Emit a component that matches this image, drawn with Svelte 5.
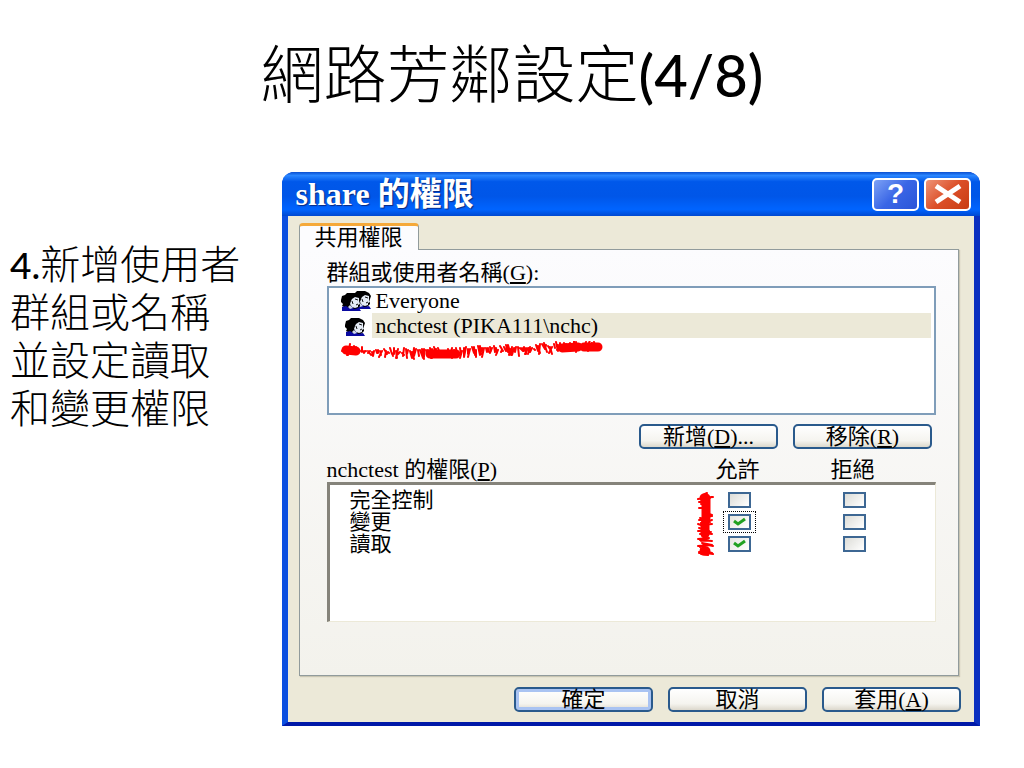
<script lang="ts">
  type Permission = { id: string; label: string; allow: boolean; deny: boolean; focused?: boolean };

  let permissions = $state<Permission[]>([
    { id: "full", label: "完全控制", allow: false, deny: false },
    { id: "change", label: "變更", allow: true, deny: false, focused: true },
    { id: "read", label: "讀取", allow: true, deny: false },
  ]);

  const steps = ["新增使用者", "群組或名稱", "並設定讀取", "和變更權限"];

  const noise = (i: number) => {
    const n = Math.sin(i * 127.1 + 11.7) * 43758.5453;
    return n - Math.floor(n);
  };

  // rough marker stroke: short dashes scattered round [position, centre, half thickness]
  function scribble(points: number[][], vertical = false) {
    return points
      .map(([t, c, h], i) => {
        const a = Math.round(c - h + noise(i) * h);
        const b = Math.round(c + h - noise(i + 500) * h);
        const shift = Math.round(noise(i + 900) * 6 - 3);
        return vertical ? `M${a} ${t}L${b} ${t + shift}` : `M${t} ${a}L${t + shift} ${b}`;
      })
      .join("");
  }

  const underline = scribble(
    Array.from({ length: 126 }, (_, i) => {
      const t = 4 + i * 2;
      const centre = t < 40 ? 8 + t / 10 : t < 110 ? 12 : 12 - (t - 110) / 20;
      const half = t > 25 && t < 50 ? 4 : 6;
      return [t, centre, half];
    })
  );
  const sideMark = scribble(
    Array.from({ length: 42 }, (_, i) => [4 + Math.round(i * 1.45), 9, 8]),
    true
  );
</script>

{#snippet head()}
  <path d="m1 8 1-4 3-1 2-2h8l4 2 2 3-1 3v5l-3 3H7l-3-2-2-1 1-2-2-2z" fill="#000" />
  <path d="m12 7 3-2 4 1v3l1 3-2 1v2l-3 1-3-1-2-3 1-3z" fill="#e4ebf5" />
  <path d="m15 7 3 1m-2 5 2-1M12 9l1 3" stroke="#111" fill="none" />
  <path d="m2 15 4-1 3 2 2-2 3 3 5-1 2 3H2z" fill="#0a0aa0" />
  <path d="m10 13 3 3-3 1-2-2z" fill="#cfd8ea" />
{/snippet}

<main class="slide">
  <h1>網路芳鄰設定<span class="latin">(4/8)</span></h1>

  <div class="content">
    <p class="note">
      <span class="latin">4.</span>{#each steps as step, i}{#if i}<br />{/if}{step}{/each}
    </p>

    <section class="dialog" aria-labelledby="dialog-title">
      <header class="titlebar">
        <h2 id="dialog-title">share 的權限</h2>
        <button class="caption help" aria-label="說明">?</button>
        <button class="caption close" aria-label="關閉">
          <svg viewBox="0 0 30 22" aria-hidden="true"><path d="m3 3 24 16M27 3 3 19" /></svg>
        </button>
      </header>

      <div class="body">
        <div class="tabs" role="tablist">
          <button class="tab" role="tab" aria-selected="true">共用權限</button>
        </div>

        <div class="panel" role="tabpanel">
          <div class="label" id="names-label">群組或使用者名稱(<u>G</u>):</div>
          <div class="names" role="listbox" aria-labelledby="names-label">
            <div class="name" role="option" aria-selected="false">
              <svg class="people" viewBox="0 0 32 20" aria-hidden="true">
                <g transform="translate(10 -1)">{@render head()}</g>
                <g transform="translate(0 1)">{@render head()}</g>
              </svg>
              <span>Everyone</span>
            </div>
            <div class="name selected" role="option" aria-selected="true">
              <svg class="people" viewBox="0 0 32 20" aria-hidden="true">
                <g transform="translate(4 1)">{@render head()}</g>
              </svg>
              <span>nchctest (PIKA111\nchc)</span>
            </div>
            <svg class="mark underline" viewBox="0 0 264 20" aria-hidden="true">
              <path d={underline} />
              <path class="blob" d="m6 9 10 1M90 13h26M222 7l16-1M244 6h14" />
            </svg>
          </div>

          <div class="actions">
            <button class="push">新增(<u>D</u>)...</button>
            <button class="push">移除(<u>R</u>)</button>
          </div>

          <div class="columns">
            <span>nchctest 的權限(<u>P</u>)</span>
            <span class="col">允許</span>
            <span class="col">拒絕</span>
          </div>
          <div class="perms">
            <table aria-label="nchctest 的權限">
              <tbody>
                {#each permissions as p (p.id)}
                  <tr>
                    <th scope="row">{p.label}</th>
                    <td>
                      <label class="tick" class:focused={p.focused}>
                        <input type="checkbox" aria-label="{p.label} 允許" bind:checked={p.allow} />
                      </label>
                    </td>
                    <td>
                      <label class="tick">
                        <input type="checkbox" aria-label="{p.label} 拒絕" bind:checked={p.deny} />
                      </label>
                    </td>
                  </tr>
                {/each}
              </tbody>
            </table>
            <svg class="mark side" viewBox="0 0 18 68" aria-hidden="true">
              <path d={sideMark} />
              <path class="blob" d="M8 7h2v20M9 33v10M8 60h2" />
            </svg>
          </div>
        </div>

        <footer class="actions">
          <button class="push default">確定</button>
          <button class="push">取消</button>
          <button class="push">套用(<u>A</u>)</button>
        </footer>
      </div>
    </section>
  </div>
</main>

<style>
  :global(body) { margin: 0; background: #fff; }

  .slide { padding: 32px 44px 40px 10px; color: #000; font-family: "Noto Sans CJK TC", sans-serif; }
  .latin { font-family: Lato, sans-serif; font-weight: 500; line-height: 0; }
  h1 { margin: 0 0 64px 34px; text-align: center; font-size: 63px; line-height: 76px; font-weight: 300; }
  h1 .latin { font-size: 58px; }

  .content { display: grid; grid-template-columns: 28fr 72fr; }
  .note { margin: 66px 0 0; font-size: 40px; line-height: 48px; font-weight: 300; white-space: nowrap; }
  .note .latin { font-size: 37px; }

  .dialog { box-sizing: border-box; border: 6px solid #0b4fe0; border-width: 0 6px 4px; border-color: #0b4fe0 #0a2fc0 #0019a8 #0b4fe0; border-radius: 12px 12px 0 0; background: #0b4fe0; font-family: "Liberation Serif", "Noto Sans CJK TC", serif; font-size: 22px; line-height: 24px; }
  button { font: inherit; color: inherit; }

  .titlebar { display: flex; align-items: center; gap: 5px; height: 44px; margin: 0 -6px; padding: 0 9px 0 14px; box-sizing: border-box; border-radius: 12px 12px 0 0; background: linear-gradient(#0a4fd0, #2a86ff 8%, #0058ea 22%, #0056e8 55%, #0064ff 85%, #0048d0); }
  h2 { flex: 1; margin: 0; color: #fff; font-size: 32px; line-height: 36px; font-weight: 700; text-shadow: 1px 1px 1px #0a2a80; }
  .caption { display: flex; align-items: center; justify-content: center; width: 47px; height: 33px; padding: 0; border: 2px solid #fff; border-radius: 5px; color: #fff; }
  .help { background: linear-gradient(135deg, #7da2f5, #3a66e6 50%, #2a55d8); font: 700 28px/28px "Liberation Sans", sans-serif; }
  .close { background: linear-gradient(135deg, #ee9478, #dc4f28 50%, #c83c14); }
  .close svg { width: 30px; height: 22px; stroke: #fff; stroke-width: 5; }

  .body { padding: 7px 15px 10px 11px; background: #ece9d8; }
  .tabs { display: flex; height: 26px; }
  .tab { position: relative; z-index: 1; height: 27px; padding: 0 15px; border: 1px solid #919b9c; border-width: 3px 1px 0; border-top-color: #f5a93a; border-radius: 4px 4px 0 0; background: #fcfcfe; line-height: 22px; }
  .panel { padding: 11px 22px 53px 27px; border: 1px solid #919b9c; box-shadow: 1px 1px 1px #c8c5b2; background: linear-gradient(#fcfcfe, #f3f2ec); }

  .names { position: relative; box-sizing: border-box; height: 129px; margin-top: 1px; padding: 0 3px 0 11px; border: 2px solid #7f9db9; background: #fff; }
  .name { display: flex; align-items: center; }
  .name span { flex: 1; padding-left: 4px; line-height: 25px; }
  .selected span { background: #ece9d8; }
  .people { width: 32px; height: 20px; }

  .mark { position: absolute; fill: none; stroke: #f00; stroke-width: 2; stroke-linejoin: round; stroke-linecap: round; }
  .mark .blob { stroke-width: 9; }
  .underline { left: 11px; top: 53px; width: 264px; height: 20px; }
  .side { right: 221px; top: 6px; width: 18px; height: 68px; }

  .actions { display: flex; justify-content: flex-end; gap: 15px; }
  .panel .actions { margin: 9px 4px 9px 0; }
  footer.actions { margin: 11px -2px 0 0; }
  .push { width: 139px; height: 25px; padding: 0; border: 2px solid #2a5a8c; border-radius: 5px; background: linear-gradient(#fff, #f5f4ef 70%, #dcd8cc); font-size: 22px; line-height: 20px; }
  .default { box-shadow: inset 0 0 0 3px #a9c3f2; }

  .columns { display: grid; grid-template-columns: 1fr 115px 115px; padding-right: 26px; line-height: 24px; }
  .col { text-align: center; }
  .perms { position: relative; box-sizing: border-box; height: 140px; padding: 4px 23px 0 20px; border: 1px solid #ece9d8; border-top: 3px solid #85837a; border-left: 3px solid #85837a; background: #fff; }
  table { width: 100%; border-collapse: collapse; }
  th { padding: 0; text-align: left; font-size: 21px; font-weight: 400; line-height: 22px; }
  td { width: 115px; height: 22px; padding: 0; text-align: center; line-height: 0; }
  .tick { display: inline-block; padding: 2px 4px; border: 1px dotted transparent; }
  .focused { border-color: #000; }
  .tick input { appearance: none; display: block; width: 23px; height: 16px; margin: 0; border: 2px solid #3d6793; background: linear-gradient(135deg, #dcdcd7, #fff); }
  .tick input:checked { background: url("data:image/svg+xml,%3Csvg xmlns='http://www.w3.org/2000/svg' viewBox='0 0 19 12'%3E%3Cpath d='m4 5 4 3 7-5' fill='none' stroke='%2321a121' stroke-width='3'/%3E%3C/svg%3E") center / 19px 12px no-repeat, linear-gradient(135deg, #e6e6e0, #fff); }
</style>
